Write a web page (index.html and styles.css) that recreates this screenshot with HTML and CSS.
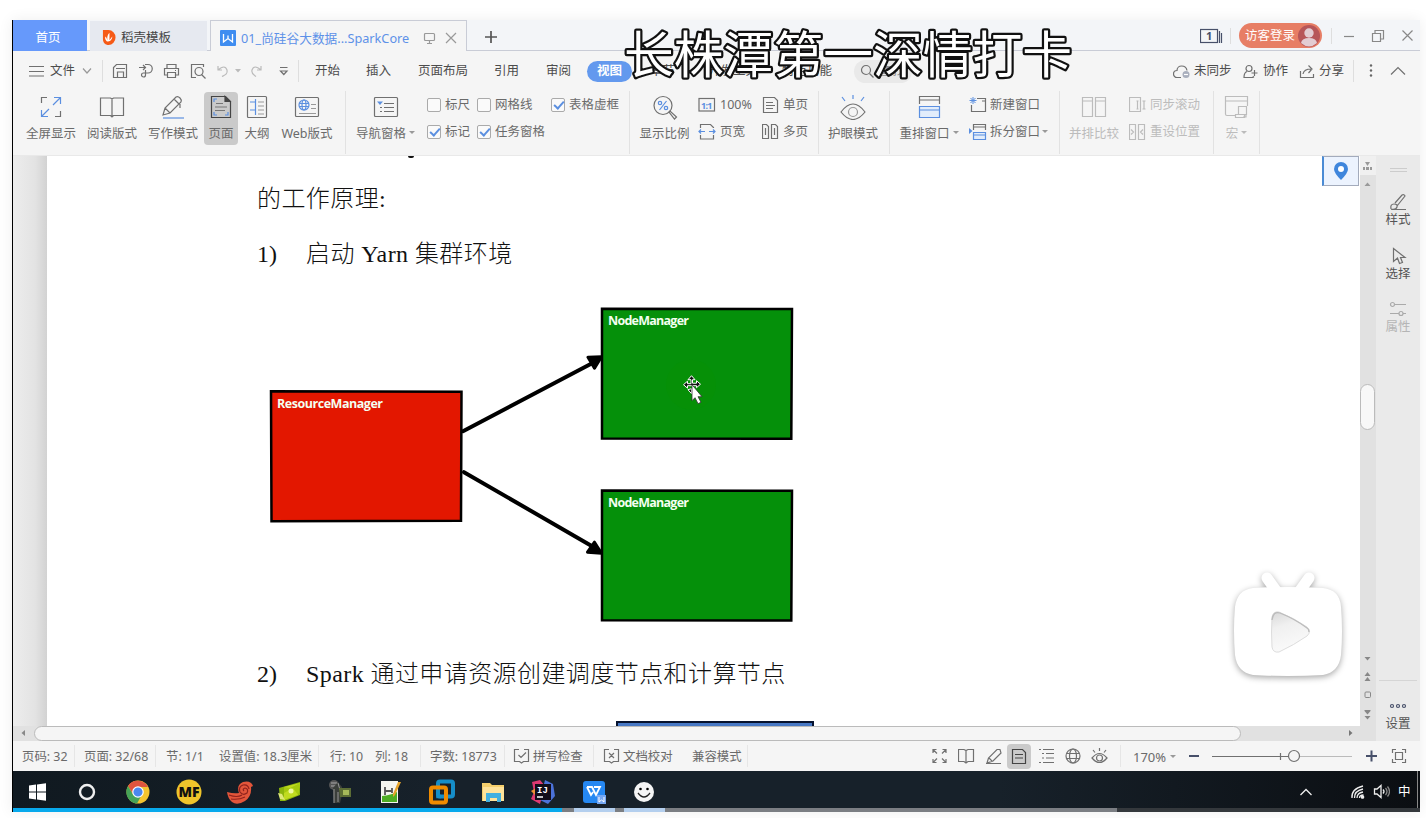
FILE: index.html
```html
<!DOCTYPE html>
<html lang="zh-CN">
<head>
<meta charset="utf-8">
<title>SparkCore</title>
<link rel="stylesheet" href="styles.css">
</head>
<body>
<main class="window">
  <header class="titlebar">
    <div class="tab home">首页</div>
    <div class="tab template">
      <svg width="14" height="15" viewBox="0 0 15 16"><path d="M1 0h6a7.500 8 0 0 1 0 16H6a6 6 0 0 1-5-6z" fill="#f65a16"/><path d="M5 12c-2-2-2-4-1-5l2 4c-1-3 0-6 2-8v8l3-4c0 3-2 6-6 5z" fill="#fff"/></svg>
      稻壳模板
    </div>
    <div class="tab active">
      <svg width="16" height="16"><rect width="16" height="16" rx="1" fill="#3f8df0"/><path d="M3.500 4v8l4.500-3.500 4.500 3.500V4M8 8.500V5.500" fill="none" stroke="#fff" stroke-width="1.300"/></svg>
      <span class="tab-name">01_尚硅谷大数据...SparkCore</span>
      <svg class="line light" width="14" height="14"><rect x="1.500" y="2.500" width="10" height="7" rx="1"/><path d="M6.500 10v2M4 12.500h5"/></svg>
      <svg class="line light close" width="12" height="12"><path d="M1 1l10 10M11 1L1 11"/></svg>
    </div>
    <svg class="line plus" width="14" height="14"><path d="M7 1v12M1 7h12"/></svg>
    <svg class="line navy" width="23" height="16"><rect x=".5" y="1.500" width="17" height="13"/><path d="M19.500 3v12M21.500 5v10"/><text x="6" y="12" class="badge-num">1</text></svg>
    <i class="sep"></i>
    <div class="login">访客登录
      <svg width="22" height="22"><circle cx="11" cy="11" r="11" fill="#b75659"/><circle cx="11" cy="8" r="4.700" fill="#e3ccd2"/><path d="M3 18q1-5 8-5t8 5q-8 7-16 0z" fill="#e3ccd2"/></svg>
    </div>
    <i class="sep"></i>
    <svg class="line mid" width="12" height="14"><path d="M1 7.500h10"/></svg>
    <svg class="line mid" width="14" height="14"><path d="M1.500 4.500h8v8h-8zM4 4V1.500h8.500V10H10"/></svg>
    <svg class="line mid" width="13" height="13"><path d="M1.500 1.500l10 10M11.500 1.500l-10 10"/></svg>
  </header>

  <nav class="menubar">
    <svg class="line" width="16" height="14"><path d="M0 2.500h15M0 7.500h15M0 12h15"/></svg>
    <span>文件</span>
    <svg class="line light" width="12" height="8"><path d="M2 1.500l4 4.500 4-4.500"/></svg>
    <i class="sep"></i>
    <svg class="line" width="16" height="16"><path d="M1.500 14.500v-10l3-3h10v13zM4 5.500h9M5.500 14v-5h6v5"/></svg>
    <svg class="line" width="16" height="16"><path d="M1 4.500h6M5 2l2.500 2.500L5 7M7 1.500h3a4 4 0 0 1 0 8.500H5M7.500 7v5a2 2 0 1 1-2-2"/></svg>
    <svg class="line" width="17" height="16"><path d="M4 5V1.500h9V5M4 12H1.500V5.500h14V12H13M4.500 9.500h8v5h-8zM12 7.500h1"/></svg>
    <svg class="line" width="17" height="16"><path d="M6 14.500H1.500v-13h12V4M11.500 11.500l4 4"/><circle cx="9" cy="8.500" r="4"/></svg>
    <svg class="line pale" width="16" height="14"><path d="M3 2v4h4M3 6q7-6 9 0c1 4-2 5-5 6.500"/></svg>
    <svg width="7" height="5"><path d="M0 0h6L3 3.500z" fill="#bbb"/></svg>
    <svg class="line pale" width="16" height="14"><path d="M12 2v4H8M12 6Q5 0 3 6c-1 4 2 5 4 6.500"/></svg>
    <svg class="line" width="10" height="11"><path d="M1 1.500h7.500M1.500 5l3.300 3.500L8 5z"/></svg>
    <i class="sep"></i>
    <span>开始</span><span>插入</span><span>页面布局</span><span>引用</span><span>审阅</span>
    <span class="current">视图</span>
    <span>章节</span><span>开发工具</span><span>特色功能</span>
    <span class="search"><svg class="line" width="15" height="15"><circle cx="6" cy="6" r="4.500"/><path d="M9.500 9.500l4 4"/></svg>查找</span>
    <svg class="line" width="18" height="15"><path d="M8 13.500H4a3.500 3.500 0 0 1 0-7c0-6 9-6 10 0"/><circle cx="13" cy="10.500" r="3.500" fill="#a9afbd" stroke="none"/><path d="M11 10.500h4" stroke="#fff"/></svg>
    <span>未同步</span>
    <svg class="line" width="16" height="15"><circle cx="7" cy="4.500" r="3"/><path d="M5 7.500q-3 1-3 6h8q1 0 2-1M12.500 6v6M9.500 9h6"/></svg>
    <span>协作</span>
    <svg class="line" width="16" height="15"><path d="M1.500 7v6.500h13V10M4 10q1-5 8-5M9.500 1.500L13 5l-3.500 4"/></svg>
    <span>分享</span>
    <i class="sep"></i>
    <svg width="16" height="16" fill="#666"><circle cx="8" cy="2.500" r="1.200"/><circle cx="8" cy="7.500" r="1.200"/><circle cx="8" cy="12.500" r="1.200"/></svg>
    <svg class="line" width="16" height="10"><path d="M1 8.500l7-7 7 7"/></svg>
  </nav>

  <section class="ribbon">
    <div class="group views">
      <div class="tool"><svg class="line" width="24" height="24"><path d="M2.500 8V2.500H8M21.500 16v5.500H16"/><path class="blue" d="M14 10l7.500-7.500M15 2.500h6.500V9M10 14l-7.500 7.500M9 21.500H2.500V15"/></svg>全屏显示</div>
      <div class="tool"><svg class="line" width="26" height="24"><path d="M1.500 3h10l1.500 1 1.500-1h10v17.500h-10L13 22l-1.500-1.500h-10zM13 4v17"/></svg>阅读版式</div>
      <div class="tool"><svg class="line" width="24" height="24"><path d="M2 20l2-7L15 2q2-1 4 1t1 4L9 18zM4 13l5 5M13 4l5 5M19 9v4"/><path class="blue" d="M2 23h21"/></svg>写作模式</div>
      <div class="tool selected"><svg class="line dark" width="24" height="24"><path d="M2.500 1.500h14l5 5v16h-19z"/><path d="M16 1.500v5h5z" fill="#444"/><path d="M7 8.500h7M6 12h12M6 15.500h10" stroke="#777"/><path class="blue" d="M5 7V4h3M5 17v3h3M19 17v3h-3"/></svg>页面</div>
      <div class="tool"><svg class="line" width="22" height="24"><rect x="1.500" y="1.500" width="19" height="21" rx="1"/><path class="blue" d="M9.500 4v16M4 7h5M4 15h5"/><path d="M12 7h6M12 11h6M12 15h6M12 19h6" stroke="#999"/></svg>大纲</div>
      <div class="tool"><svg class="line" width="26" height="24"><rect x="1.500" y="2.500" width="23" height="19" rx="1"/><path d="M17 9.500h5M17 13.500h5M5 18.500h17" stroke="#999"/><g class="blue"><circle cx="10" cy="10" r="5"/><ellipse cx="10" cy="10" rx="2" ry="5"/><path d="M5 8.500h10M5 11.500h10"/></g></svg>Web版式</div>
    </div>
    <div class="group panes">
      <div class="tool"><svg class="line" width="26" height="24"><rect x="1.500" y="2.500" width="23" height="19" rx="1"/><path d="M11 8.500h10M11 12.500h10M11 16.500h10M7 12.500h2M7 16.500h2"/><path d="M4 6.500h6L7 10z" fill="#5b8fe0" stroke="none"/></svg><span>导航窗格<b class="drop"></b></span></div>
      <div class="checks">
        <label><i class="box"></i>标尺</label><label><i class="box"></i>网格线</label><label><i class="box on"></i>表格虚框</label>
        <label><i class="box on"></i>标记</label><label><i class="box on"></i>任务窗格</label>
      </div>
    </div>
    <div class="group zoom">
      <div class="tool"><svg class="line" width="26" height="25"><circle cx="11" cy="10.500" r="9"/><path d="M17 17l1-1 6.500 6-2 2z"/><g class="blue"><circle cx="8" cy="8" r="1.700"/><circle cx="14" cy="13" r="1.700"/><path d="M14.500 6l-7 9"/></g></svg>显示比例</div>
      <div class="pair">
        <span><svg class="line" width="18" height="16"><rect x="1" y="1.500" width="15.500" height="12.500"/><text x="3" y="11.500" class="ratio" textLength="11.500">1:1</text></svg>100%</span>
        <span><svg class="line" width="18" height="18"><path d="M2.500 5V1.500h10l3 3V5M2.500 12v4h13v-4"/><path class="blue" d="M1 8.500h6M11 8.500h6M3 6.500l-2 2 2 2M15 6.500l2 2-2 2"/></svg>页宽</span>
      </div>
      <div class="pair second">
        <span><svg class="line" width="17" height="18"><path d="M1.500 1.500h11l3 3v12h-14zM4 6.500h7M4 9.500h9M4 12.500h7"/></svg>单页</span>
        <span><svg class="line" width="17" height="18"><path d="M.5 1.500h4l2 2v12h-6zM9.500 1.500h4l2 2v12h-6zM3.500 5v7M12.500 5v7"/></svg>多页</span>
      </div>
    </div>
    <div class="group eye">
      <div class="tool"><svg class="line" width="28" height="26"><path d="M2 17q12-16 24 0-12 15-24 0z"/><circle cx="14" cy="17" r="4.500" stroke="#999"/><path class="blue" d="M14 0v4M3 2l3 4M25 2l-3 4"/></svg>护眼模式</div>
    </div>
    <div class="group windows">
      <div class="tool"><svg class="line" width="24" height="24"><path d="M2.500 9V1.500h20V9M2.500 5h20"/><path class="blue" fill="#e2edfb" d="M2.500 11.500h20v11h-20zM2.500 15h20"/></svg><span>重排窗口<b class="drop"></b></span></div>
      <div class="pair">
        <span><svg class="line" width="19" height="18"><path d="M8 2.500h8.500v13h-14V9M13 5h3"/><path class="blue" d="M4 1v7M.500 4.500h7M1.500 2l5 5M6.500 2l-5 5" stroke-width="1"/></svg>新建窗口</span>
        <span><svg class="line" width="19" height="18"><path d="M4.500 7V1.500h12V7M4.500 4h12"/><path class="blue" fill="#e2edfb" d="M4.500 9.500h12v7h-12zM4.500 12h12"/><path d="M0 5l3.500 3L0 11z" fill="#5b8fe0" stroke="none"/></svg>拆分窗口<b class="drop"></b></span>
      </div>
    </div>
    <div class="group compare disabled">
      <div class="tool"><svg class="line" width="26" height="24"><path d="M1.500 2.500h10v19h-10zM14.500 2.500h10v19h-10zM1.500 6h10M14.500 6h10"/></svg>并排比较</div>
      <div class="pair">
        <span><svg class="line" width="19" height="18"><path d="M11.500 1.500H.500v14h11zM8.500 5v8M7.500 5h2M7.500 13h2M15 5v8M13.500 5h3M13.500 13h3"/></svg>同步滚动</span>
        <span><svg class="line" width="19" height="18"><path d="M.5 1.500h6v15h-6zM9.500 1.500h6v15h-6zM2 6.500L4.500 9 2 11.500M14 6.500L11.500 9l2.500 2.500"/></svg>重设位置</span>
      </div>
    </div>
    <div class="group macro disabled">
      <div class="tool"><svg class="line" width="26" height="24"><path d="M12 20.500H3q-1.500 0-1.500-1.500V1.500h22V11M1.500 6h22M14.500 11.500h8v8h-8zM11.500 19.500h9v3h-9zM22 19v3h-3"/></svg><span>宏<b class="drop"></b></span></div>
    </div>
    <div class="group rest"></div>
  </section>

  <section class="workspace">
    <div class="gutter"></div>
    <article class="page">
      <i class="descender"></i>
      <p class="lead">的工作原理:</p>
      <p class="item"><span>1)</span>启动 Yarn 集群环境</p>
      <svg class="diagram" width="620" height="365" viewBox="257 282.300 620 365">
        <g stroke="#000" stroke-width="2.500">
          <path d="M271 391.500L461.500 392l-.5 129-189.500.5z" fill="#e31700"/>
          <path d="M602 309l190 .3-.7 129.700L602 438.700z" fill="#05900a"/>
          <path d="M602 490.800l190 .3-.7 129.700-189.300-.3z" fill="#05900a"/>
        </g>
        <g stroke="#000" stroke-width="4" stroke-linecap="round"><path d="M463 431.500L594 362.500M464 472.500L593 547"/></g>
        <path d="M588 357.500l13.500-.5-7 11.500zM594.500 542.500l7 11-14-1z" stroke="#000" stroke-width="3" stroke-linejoin="round"/>
        <g class="node-name">
          <text x="277" y="408" textLength="106">ResourceManager</text>
          <text x="608" y="325.500" textLength="81">NodeManager</text>
          <text x="608" y="507.300" textLength="81">NodeManager</text>
        </g>
        <circle cx="691" cy="385" r="25" fill="#069007"/>
        <g stroke="#fff" stroke-width="1" fill="#111"><path d="M691.500 376l3.500 4h-2.500v3.500h4v-2.500l4 3.500-4 3.500V386h-9v2.500l-4-3.500 4-3.500v2.500h3.500V380H688zM688 390l3.500 4v-5z"/></g>
        <path d="M692 385v16l3-3 3 6 3-1.500-3-5.500h4z" fill="#fff" stroke="#333" stroke-width=".8"/>
      </svg>
      <p class="item"><span>2)</span>Spark 通过申请资源创建调度节点和计算节点</p>
      <div class="next-figure"></div>
      <div class="locate"><svg width="16" height="19"><path d="M8 18Q1 11 1 7a7 7 0 0 1 14 0q0 4-7 11z" fill="#3f86dc"/><circle cx="8" cy="7" r="3" fill="#fff"/></svg></div>
    </article>
    <div class="vscroll">
      <svg width="16" height="36"><rect width="16" height="19" fill="#f0f0f0"/><path d="M5 6h5l-2.500 4zM3 11h2v3H3zM6 11h3v3H6zM10 11h2v3h-2zM4.500 30h6l-3-3.500z" fill="#999"/></svg>
      <i class="vthumb"></i>
      <svg class="bottom" width="16" height="86"><path d="M4.500 2h6l-3 3.500zM4.500 21h6l-3-4zM4.500 26h6l-3-4zM4.500 56h6l-3 3.500zM4.500 61h6l-3 3.500zM4.500 55h6v1h-6z" fill="#888"/><rect x="5" y="37" width="5.500" height="5.500" rx="1" fill="none" stroke="#888"/></svg>
    </div>
    <div class="hscroll">
      <svg width="21" height="14"><path d="M12 4v6L8.500 7z" fill="#888"/></svg><i class="hthumb"></i><svg class="right" width="16" height="14"><path d="M5 4v6l3.500-3z" fill="#777"/></svg>
    </div>
    <aside class="sidebar">
      <i class="handle"></i>
      <div><svg class="line" width="18" height="18"><path d="M2 16.500h15M2 16q-1-5 3-5t3 3-6 2M6 10l7-8q2-1 3 1L8 13"/></svg>样式</div>
      <div><svg class="line" width="18" height="18"><path d="M4.500 1.500v13l4-3.500 2 5.500 3-1-2-5h4.500z"/></svg>选择</div>
      <div class="off"><svg class="line" width="18" height="18"><circle cx="3.500" cy="4.500" r="2"/><path d="M6 4.500h11M1 13.500h9M14 13.500h3"/><circle cx="12" cy="13.500" r="2"/></svg>属性</div>
      <div class="settings"><svg class="line navy" width="18" height="10"><circle cx="3" cy="5" r="1.500"/><circle cx="9" cy="5" r="1.500"/><circle cx="15" cy="5" r="1.500"/></svg>设置</div>
    </aside>
  </section>

  <footer class="status">
    <span>页码: 32</span><i class="sep"></i><span>页面: 32/68</span><i class="sep"></i><span>节: 1/1</span><span>设置值: 18.3厘米</span><i class="sep"></i><span>行: 10</span><span>列: 18</span><i class="sep"></i><span>字数: 18773</span><i class="sep"></i>
    <svg class="line" width="17" height="16"><path d="M6 1.500H1.500v12h5l2 1.500 2-1.500h5v-12H11M5.500 7l2.500 2.500L13 4.500"/></svg><span>拼写检查</span><i class="sep"></i>
    <svg class="line" width="17" height="16"><path d="M6 1.500H1.500v12h5l2 1.500 2-1.500h5v-12H11M6 5l5 5M11 5l-5 5"/></svg><span>文档校对</span><span>兼容模式</span><i class="sep"></i>
    <svg class="line" width="17" height="16"><path d="M2 5V1.500h3.500M2 1.500l4 4M11.500 1.500H15V5M15 1.500l-4 4M2 11v3.500h3.500M2 14.500l4-4M15 11v3.500h-3.500M15 14.500l-4-4"/></svg>
    <svg class="line" width="17" height="16"><path d="M.5 1.500H6l2 1 2-1h5.500v12H10L8 15l-2-1.500H.500zM8 2.500V15"/></svg>
    <svg class="line" width="17" height="17"><path d="M1 15.500h15M2 15l1.500-5L12 1.500h3L16 5l-8 8zM4 10l3 3"/></svg>
    <span class="view-on"><svg class="line dark" width="16" height="17"><path d="M1.500 1.500h10l3 3v11h-13zM4 6.500h8M4 10h8"/></svg></span>
    <svg class="line" width="17" height="16"><path d="M1 1.500h2M5 1.500h11M4 5.500h2M8 5.500h8M4 10h2M8 10h8M1 14.500h2M5 14.500h11"/></svg>
    <svg class="line" width="17" height="17"><circle cx="8" cy="8" r="7"/><ellipse cx="8" cy="8" rx="3.500" ry="7"/><path d="M1.500 5.500h13M1.500 10.500h13"/></svg>
    <svg class="line" width="18" height="17"><path d="M1 10q7.500-9 15 0-7.500 9-15 0zM8.500 0v3M2 2l2 2.500M15 2l-2 2.500"/><circle cx="8.500" cy="10" r="3"/></svg>
    <i class="sep"></i><span class="percent">170%</span><b class="drop"></b>
    <svg class="line navy heavy" width="12" height="14"><path d="M1 7h10"/></svg>
    <svg class="line" width="142" height="16"><path d="M2 8.500h76M70.500 5v7"/><path d="M90 8.500h52" stroke="#bbb"/><circle cx="84" cy="8" r="5.500"/></svg>
    <svg class="line navy heavy" width="13" height="14"><path d="M1 7h11M6.500 1.500v11"/></svg>
    <svg class="line" width="16" height="16"><path d="M1.500 5V1.500H5M11 1.500h3.500V5M1.500 11v3.500H5M11 14.500h3.500V11M4.500 4.500h7v7h-7z"/></svg>
  </footer>

  <footer class="taskbar">
    <div class="apps">
      <svg viewBox="0 0 26 26"><path d="M5 6.500l7-1v7H5zM13 5.400l9-1.200v8.300h-9zM5 13.500h7v7l-7-1zM13 13.500h9v8.300l-9-1.200z" fill="#fff"/></svg>
      <svg viewBox="0 0 26 26"><circle cx="12" cy="13" r="7" fill="none" stroke="#eee" stroke-width="2.400"/></svg>
      <svg viewBox="0 0 26 26"><circle cx="13" cy="13" r="11.500" fill="#f4c430"/><path d="M3 7a11.500 11.500 0 0 1 20 1H13l-5 7z" fill="#e0553f"/><path d="M3 7a11.500 11.500 0 0 0 9 17.500l5-9-9 0z" fill="#45a357"/><circle cx="13" cy="13" r="5.200" fill="#4b88ee" stroke="#fff" stroke-width="1.200"/></svg>
      <svg viewBox="0 0 26 26"><circle cx="13" cy="13" r="12.500" fill="#efc52b"/><text x="13" y="18" text-anchor="middle" class="mf">MF</text></svg>
      <svg viewBox="0 0 26 26"><path d="M0 13q7 2 12 1-3-8 4-11 8-2 10 4l-2 1q1 9-6 14-8 5-13 1-4-3-5-10z" fill="#e2553a"/><path d="M22 10q-1-5-6-4-5 2-3 7 3 4 7 1 2-4-2-5-3 1-1 3M2 16q8 3 13 0M4 20q8 1 14-2" fill="none" stroke="#8e221c" stroke-width="1.200"/></svg>
      <svg viewBox="0 0 26 26"><path d="M2 9l21-6v13l-15 6H3z" fill="#8cb50c"/><path d="M7 8l16-4-2 12-14 5z" fill="#c0db20"/><path d="M7 8l6 1 10-5-2 12-5-7-9 5z" fill="#a5c90f"/><circle cx="14" cy="12" r="2.500" fill="#eff8a0"/><path d="M1 14l4 1 3 6-5-1z" fill="#dde878"/></svg>
      <svg viewBox="0 0 26 26"><circle cx="6" cy="6" r="5" fill="#555"/><path d="M3 4l6 0M3 7h6" stroke="#aaa" stroke-width="1"/><path d="M5 9l5-6 4 5 0 8-2 8H6z" fill="#3b3f3b"/><path d="M10 4l2 7M6 10v14M10 13v10" stroke="#999"/><path d="M11 9h12v9H12z" fill="#5c6d35"/><path d="M15 11h6v5h-6z" fill="#a6b95a"/></svg>
      <svg viewBox="0 0 26 26"><path d="M3 2h17v22H3z" fill="#f4f5f0"/><path d="M4 17q9-1 15-4v10H4z" fill="#4eae25"/><path d="M7 8v8M7 12h7M14 9v5" stroke="#555" stroke-width="1.800"/><path d="M23 3l-6 13-2 2 0-3 5-12z" fill="#e6a42c"/></svg>
      <svg viewBox="0 0 26 26"><rect x="9" y="2.500" width="15" height="15" rx="2" fill="none" stroke="#168ec9" stroke-width="4"/><rect x="2" y="8.500" width="15" height="15" rx="2" fill="none" stroke="#ef8b00" stroke-width="4"/><path d="M9 11v6.500h3" fill="none" stroke="#168ec9" stroke-width="3.500"/></svg>
      <svg viewBox="0 0 26 26"><path d="M2 4h8l2 2h12v16H2z" fill="#f5cf6c"/><path d="M3 8h21v14H3z" fill="#ffe39a"/><path d="M6 14h15v9h-4v-4H10v4H6z" fill="#42b0df"/></svg>
      <svg viewBox="0 0 26 26"><path d="M2 3l8-2 5 6-5 18-9-5 3-7z" fill="#dd3971"/><path d="M15 1l8 4 2 12-7 8-8-4z" fill="#4b72d9"/><path d="M1 12l5-3v8z" fill="#ed8f33"/><rect x="5" y="5" width="16" height="16" fill="#120d19"/><text x="7" y="14" class="ij">IJ</text><path d="M7 18h6" stroke="#fff" stroke-width="1.500"/></svg>
      <svg viewBox="0 0 26 26"><rect x="2" y="2" width="22" height="22" rx="3" fill="#2688f2"/><path d="M6 8h5l4 8 4-8h-6M6 8l4 8 2-3" fill="none" stroke="#fff" stroke-width="1.800"/><rect x="16" y="16" width="9" height="9" fill="#75a7f3"/><path d="M18 18v5l2.500-2 2.500 2v-5" fill="none" stroke="#fff"/></svg>
      <svg viewBox="0 0 26 26"><circle cx="13" cy="13" r="10" fill="#f5f5f5"/><circle cx="9.500" cy="10" r="1.300"/><circle cx="16.500" cy="10" r="1.300"/><path d="M7 14q6 8 12 0" fill="none" stroke="#222" stroke-width="1.300"/></svg>
    </div>
    <div class="tray">
      <svg width="14" height="10"><path d="M1.500 8L7 2.500 12.500 8"/></svg>
      <svg width="15" height="15"><path d="M2 14Q1 5 13 2M4.500 14Q4 7 13 5M7 14q0-5 6-6M9.500 14q0-3 4-3"/><circle cx="12.500" cy="13" r="1.200" fill="#eee"/></svg>
      <svg width="17" height="15"><path d="M1.500 5H4l4-3.500v12L4 10H1.500zM10 5.500q2 2 0 4"/><path d="M12.500 4q3 3.500 0 7M14.500 2.500q4 5 0 10" stroke="#888"/></svg>
      <span>中</span>
      <i class="edge"></i>
    </div>
    <div class="progress"><i class="played"></i><i class="buffered"><b></b><b></b></i></div>
  </footer>

  <svg class="watermark" width="470" height="66"><text x="10" y="49">长株潭第一深情打卡</text></svg>
  <svg class="player" width="126" height="126" viewBox="0 0 126 126">
    <defs><linearGradient id="play" x1="0" y1="0" x2="0.3" y2="1"><stop offset="0" stop-color="#d8d8d8"/><stop offset=".4" stop-color="#f0f0f0"/><stop offset="1" stop-color="#fafafa"/></linearGradient></defs>
    <g class="tv"><path d="M42 16l10 14M84 16L74 30" stroke="#fff" stroke-width="11" stroke-linecap="round"/><path d="M28 26Q63 24 98 26 115 28 116 45q2 25 0 48-2 17-18 20-35 2-70 0Q12 110 10 93q-2-25 0-48 2-17 18-19z" fill="#fff"/></g>
    <path d="M47 55q1-6 7-5 15 6 28 15 5 4 0 9-13 9-28 16-6 1-7-5-1-15 0-30z" fill="url(#play)" stroke="#ddd"/>
    <path d="M47 58q1-9 8-7 15 6 27 15 2 1 2 4" fill="none" stroke="#bbb" stroke-width="1.300"/>
  </svg>
</main>
</body>
</html>
```
FILE: styles.css
```css
* { box-sizing: border-box; }
body {
  margin: 0;
  padding: 20px 6px 6px 12px;
  height: 818px;
  overflow: hidden;
  background: #fff;
  color: #6a6a6a;
  font: 12.5px/18px "Noto Sans", "Noto Sans CJK SC", sans-serif;
}
svg { display: block; flex: none; }
i { font-style: normal; }
.window {
  position: relative;
  width: 1408px;
  height: 792px;
  display: flex;
  flex-direction: column;
  border-left: 1px solid #000;
  background: #f5f5f5;
  box-shadow: 0 0 14px rgba(0, 0, 0, .07);
}
.line { fill: none; stroke: #707070; stroke-width: 1.2; }
.light { stroke: #999; }
.mid { stroke: #888; }
.pale { stroke: #bbb; }
.dark { stroke: #444; }
.navy { stroke: #47506a; }
.heavy { stroke-width: 2; }
.blue { stroke: #5b8fe0; }
.sep { width: 1px; height: 22px; background: #dedede; }

.titlebar {
  display: grid;
  grid-template-columns: 77px 120px 274px 716px 30px 9px 92px 12px 28px 30px 1fr;
  align-items: center;
  height: 31px;
  background: #f3f5f8;
  border-bottom: 1px solid #c9ccd6;
  white-space: nowrap;
}
.titlebar .sep { height: 16px; }
.tab { display: flex; align-items: center; height: 30px; padding-top: 4px; }
.home { width: 74px; height: 31px; justify-content: center; padding-right: 4px; background: #6699fb; color: #fff; }
.template { width: 117px; gap: 5px; padding-left: 12px; background: #e6e9f0; color: #444; }
.active { width: 257px; height: 31px; align-self: start; padding-top: 3px; padding-left: 9px; border: 1px solid #c9ccd6; border-bottom: 0; background: #f5f5f5; color: #5d91e8; }
.tab-name { width: 187px; padding-left: 5px; font-size: 12.7px; line-height: 16px; }
.tab .close { margin-left: 8px; }
.plus { stroke: #555; stroke-width: 1.7; margin-top: 3px; }
.badge-num { font: bold 11px "Noto Sans", sans-serif; fill: #47506a; stroke: none; }
.login { display: flex; align-items: center; justify-content: space-between; width: 83px; height: 25px; padding: 0 2px 0 6px; border-radius: 13px; background: #e77e65; color: #fff; }

.menubar {
  display: grid;
  grid-template-columns: 21px 31px 21px 10px 26px 25px 27px 25px 20px 14px 30px 19px 17px 51px 52px 76px 52px 41px 63px 58px 74px 72px 319px 21px 48px 21px 36px 20px 34px 10px 27px 1fr;
  align-items: center;
  height: 40px;
  padding-left: 16px;
  color: #4c4c4c;
  white-space: nowrap;
}
.current { width: 45px; height: 21px; border-radius: 11px; background: #6399ee; color: #fff; font-weight: 700; text-align: center; line-height: 20px; }
.search { display: flex; align-items: center; gap: 5px; width: 58px; height: 23px; padding-left: 6px; border-radius: 12px; background: #e9e9e9; color: #888; }

.ribbon { display: flex; height: 65px; border-bottom: 1px solid #e9e9e9; white-space: nowrap; }
.group { position: relative; display: flex; height: 63px; border-left: 1px solid #e2e2e2; }
.tool { display: flex; flex-direction: column; align-items: center; justify-content: space-between; height: 53px; margin-top: 1px; padding: 3px 0 2px; line-height: 18px; border-radius: 4px; }
.tool svg { height: 25px; }
.selected { background: #cacaca; }
.views { display: grid; grid-template-columns: 62px 60px 62px 34px 38px 62px; width: 332px; padding-left: 7px; border: 0; }
.panes { width: 284px; }
.panes .tool { width: 79px; }
.checks { display: grid; grid-template-columns: 50px 74px 68px; grid-template-rows: 27px 27px; padding-left: 2px; }
.checks label { display: flex; align-items: center; gap: 4px; }
.box { width: 14px; height: 14px; border: 1px solid #aaa; border-radius: 2px; background: #fafafa; }
.on::after { content: ""; display: block; width: 8px; height: 4px; margin: 2px 0 0 2px; border: solid #5b8fe0; border-width: 0 0 2px 2px; transform: rotate(-48deg); }
.drop { display: inline-block; border: 3px solid transparent; border-top-color: #999; border-bottom: 0; margin-left: 3px; vertical-align: 4px; }
.pair { display: flex; flex-direction: column; height: 54px; margin-left: -1px; }
.pair span { display: flex; align-items: center; gap: 4px; height: 27px; }
.pair .drop { margin-left: 0; }
.zoom { width: 189px; }
.zoom .tool { width: 69px; }
.zoom .second { margin-left: 10px; }
.zoom .pair:not(.second) { width: 54px; }
.eye { width: 71px; }
.eye .tool { width: 68px; }
.windows { width: 170px; }
.windows .tool { width: 78px; }
.windows .pair { margin-left: 1px; }
.windows .pair span, .compare .pair span { gap: 2px; }
.compare { width: 154px; }
.compare .tool { width: 68px; }
.compare .pair { margin-left: 1px; }
.macro { width: 46px; }
.macro .tool { width: 45px; }
.disabled { color: #bcbcbc; }
.disabled .line { stroke: #bcbcbc; }
.disabled .drop { border-top-color: #bbb; }
.ratio { font: bold 9px "Noto Sans", sans-serif; fill: #5b8fe0; stroke: none; }

.workspace { display: grid; grid-template-columns: 34px 1313px 16px 44px; grid-template-rows: 570px 15px; height: 585px; }
.gutter { background: linear-gradient(90deg, #ededed, #e3e3e3 65%, #d2d2d2); }
.page { position: relative; overflow: hidden; padding: 16px 0 0 210px; background: #fff; color: #111; font: 300 24px/55px "Liberation Serif", "Noto Sans CJK SC", serif; letter-spacing: .42px; }
.page p { margin: 0; height: 55px; white-space: nowrap; }
.item span { display: inline-block; width: 49px; letter-spacing: 0; }
.descender { position: absolute; left: 361px; top: 0; width: 6px; height: 2px; border-radius: 0 0 2px 2px; background: #111; }
.node-name { font: 700 12.5px "Open Sans", sans-serif; letter-spacing: 0; fill: #f4fff0; }
.next-figure { width: 198px; height: 10px; margin: 19px 0 0 359px; border: solid #07132f; border-width: 2px 2px 0; background: #4778c5; }
.locate { position: absolute; right: 1px; top: 0; display: flex; align-items: center; justify-content: center; width: 37px; height: 30px; border: 1px solid #a3abbc; border-left: 2px solid #4a8bd5; background: #ecf3fe; }
.vscroll { grid-row: 1 / 3; grid-column: 3; display: flex; flex-direction: column; background: #e1e1e1; }
.vthumb { width: 15px; height: 46px; margin-top: 192px; border: 1px solid #bbb; border-radius: 8px; background: #f8f8f8; }
.vscroll .bottom { margin-top: auto; }
.hscroll { grid-row: 2; grid-column: 1 / 3; display: flex; background: #e1e1e1; }
.hthumb { width: 1207px; height: 15px; border: 1px solid #bbb; border-radius: 8px; background: #f5f5f5; }
.right { margin-left: auto; }
.sidebar { grid-row: 1 / 3; grid-column: 4; display: flex; flex-direction: column; align-items: center; background: #eaeaea; color: #555; }
.sidebar div { display: flex; flex-direction: column; align-items: center; height: 53.5px; line-height: 18px; }
.handle { width: 17px; height: 4px; margin: 12px 0 21px; border: solid #ccc; border-width: 1px 0; }
.sidebar .off { color: #b5b5b5; }
.off .line { stroke: #aaa; }
.sidebar .settings { width: 38px; height: 61px; margin-top: auto; padding-top: 20px; gap: 4px; border-top: 1px solid #d5d5d5; }

.status {
  display: grid;
  grid-template-columns: 52px 10px 71px 11px 53px 99px 12px 45px 45px 10px 74px 9px 20px 60px 10px 20px 69px 55px 184px 27px 27px 22px 31px 27px 26px 29px 13px 37px 18px 22px 155px 26px 1fr;
  align-items: center;
  height: 30px;
  padding-left: 9px;
  font-size: 12.4px;
  white-space: nowrap;
}
.status span:not(.view-on) { padding-top: 2px; }
.status .sep { background: #e6e6e6; }
.status .drop { width: 6px; margin: 0; }
.status .percent { font-size: 13px; padding-top: 0; }
.view-on { display: flex; align-items: center; justify-content: center; width: 24px; height: 25px; border-radius: 4px; background: #cacaca; }

.taskbar { display: grid; grid-template-columns: 1fr auto; grid-template-rows: 37px 4px; height: 41px; background: linear-gradient(90deg, #101920, #17212a 30%, #17212a 70%, #0b0e12); }
.apps { display: grid; grid-template-columns: repeat(13, 50.6px); align-items: center; justify-items: center; padding-top: 4px; margin-left: -1px; }
.apps svg { width: 26px; height: 26px; }
.mf { font: 900 14px "Noto Sans", sans-serif; fill: #111; }
.ij { font: bold 9px "Liberation Mono", monospace; fill: #fff; }
.tray { display: flex; align-items: center; padding-top: 4px; color: #fff; }
.tray svg { fill: none; stroke: #eee; stroke-width: 1.3; }
.tray svg:first-child { margin-right: 37px; }
.tray svg:nth-child(2) { margin-right: 8px; }
.tray span { width: 13px; margin: 0 6px 0 9px; }
.tray .edge { width: 1px; height: 37px; margin: -4px 2px 0 0; background: #888; }
.tray svg:nth-child(3) { margin-right: -1px; }
.progress { grid-column: 1 / 3; display: flex; background: #34383c; }
.played { width: 549px; background: #08a9ec; }
.buffered { display: flex; gap: 9px; width: 555px; padding-left: 12px; background: #7b7e83; }
.buffered b { width: 41px; background: #b4cfee; }

.watermark { position: absolute; left: 601px; top: 4px; overflow: visible; }
.watermark text { font: 400 49.8px "Noto Sans CJK SC", sans-serif; fill: #fff; stroke: #111; stroke-width: 4.5px; stroke-linejoin: round; paint-order: stroke; }
.player { position: absolute; left: 1212px; top: 542px; overflow: visible; }
.tv { filter: drop-shadow(0 2px 3px rgba(0, 0, 0, .35)); }
```
